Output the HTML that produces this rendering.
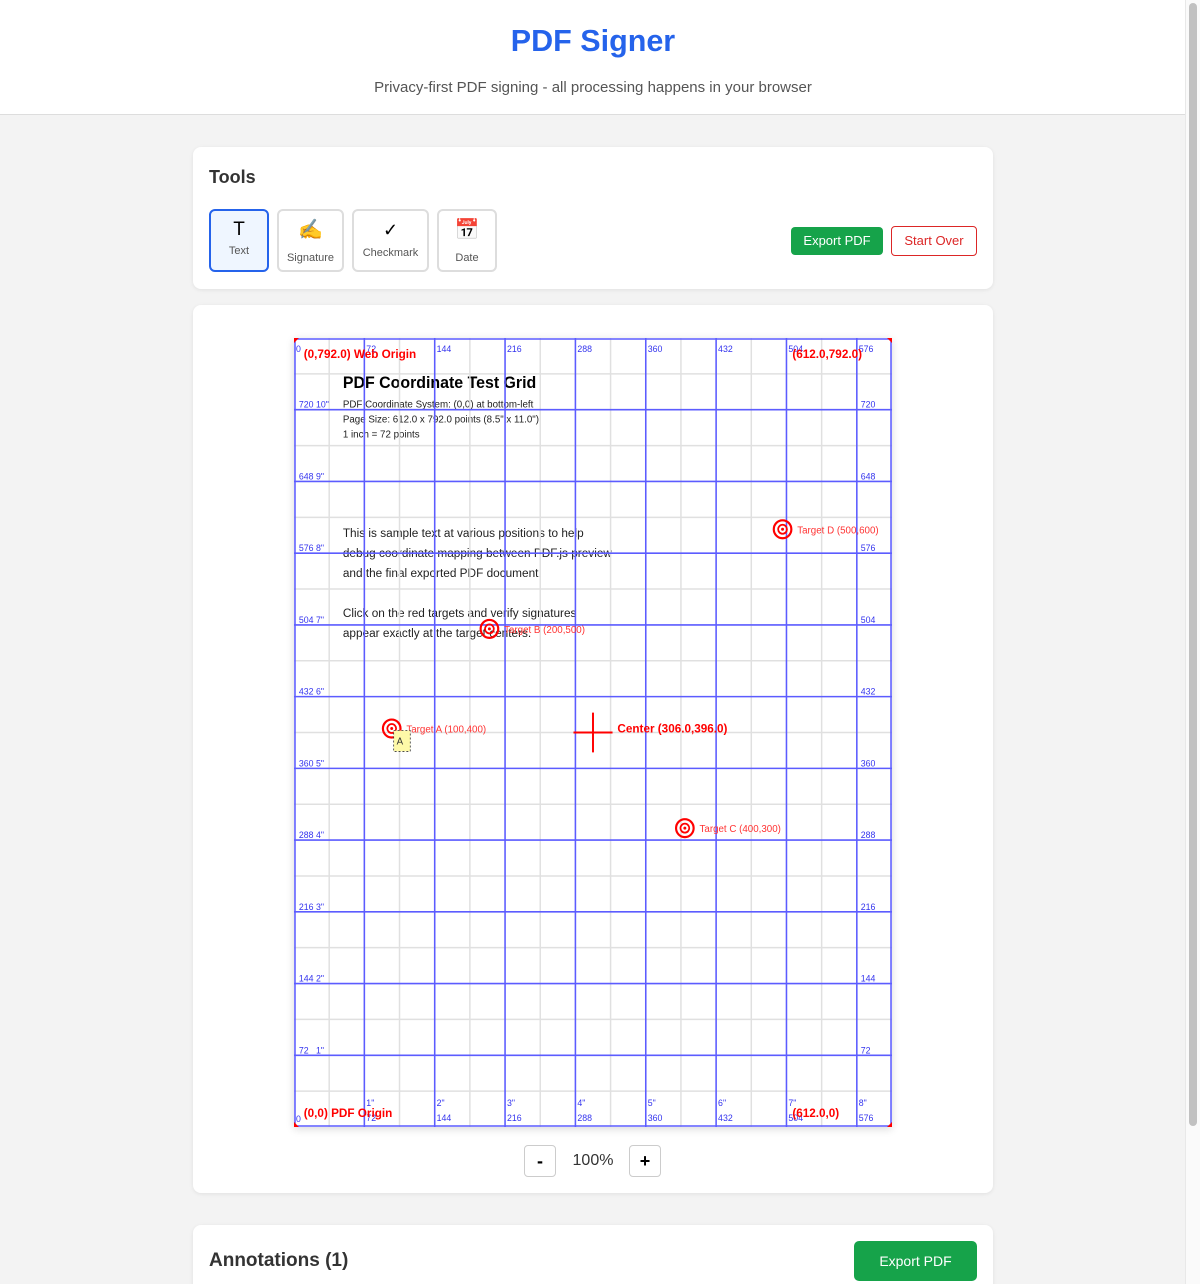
<!DOCTYPE html>
<html><head><meta charset="utf-8"><style>
*{box-sizing:border-box;margin:0;padding:0}
html,body{width:1200px;height:1284px;overflow:hidden}
body{background:#f3f3f3;font-family:"Liberation Sans",sans-serif;color:#333;position:relative}
.hdr{position:absolute;left:0;top:0;width:1186px;height:115px;background:#fff;border-bottom:1px solid #ddd;text-align:center}
.hdr h1{position:absolute;left:0;right:0;top:24px;font-size:30.5px;color:#2563eb;font-weight:bold}
.hdr p{position:absolute;left:0;right:0;top:79px;font-size:15px;color:#555}
.card{position:absolute;left:193px;width:800px;background:#fff;border-radius:8px;box-shadow:0 1px 4px rgba(0,0,0,.08)}
.tool{position:absolute;top:62px;height:63px;border:2px solid #ddd;border-radius:6px;background:#fff;text-align:center;font-size:11px;color:#555}
.tool .i{display:block;font-size:20px;margin-top:6px;height:26px;line-height:26px;color:#000}
.btn{position:absolute;font-size:13px;border-radius:4px;text-align:center}
.sb{position:absolute;left:1185px;top:0;width:15px;height:1284px;background:#fafafa;border-left:1px solid #e8e8e8}
.sb div{position:absolute;left:3px;top:3px;width:8px;height:1123px;background:#c1c1c1;border-radius:4px}
.zb{position:absolute;top:840px;width:32px;height:32px;border:1px solid #ccc;border-radius:4px;text-align:center;line-height:30px;font-size:18px;color:#000;font-weight:bold}
</style></head><body>
<div class="hdr"><h1>PDF Signer</h1><p>Privacy-first PDF signing - all processing happens in your browser</p></div>

<div class="card" style="top:147px;height:142px">
<div style="position:absolute;left:16px;top:20px;font-size:18px;font-weight:bold;color:#333">Tools</div>
<div class="tool" style="left:16px;width:60px;border-color:#2563eb;background:#eff6ff"><span class="i" style="font-size:19px">T</span><span style="position:relative;top:2px">Text</span></div>
<div class="tool" style="left:84px;width:67px"><span class="i">✍️</span><span style="position:relative;top:9px">Signature</span></div>
<div class="tool" style="left:159px;width:77px"><span class="i" style="font-size:18px">✓</span><span style="position:relative;top:4px">Checkmark</span></div>
<div class="tool" style="left:244px;width:60px"><span class="i">📅</span><span style="position:relative;top:9px">Date</span></div>
<div class="btn" style="left:598px;top:80px;width:92px;height:28px;line-height:28px;background:#16a34a;color:#fff">Export PDF</div>
<div class="btn" style="left:698px;top:79px;width:86px;height:30px;line-height:28px;border:1px solid #dc2626;color:#dc2626">Start Over</div>
</div>

<div class="card" style="top:305px;height:888px">
<svg style="position:absolute;left:101px;top:33px;box-shadow:0 2px 8px rgba(0,0,0,.15)" width="598" height="789" viewBox="0 0 612 792" preserveAspectRatio="none" font-family="Liberation Sans, sans-serif">
<rect width="612" height="792" fill="#fff"/>
<g fill="#222">
<text x="50" y="50" font-size="16.3" font-weight="bold" fill="#000">PDF Coordinate Test Grid</text>
<text x="50" y="70" font-size="10">PDF Coordinate System: (0,0) at bottom-left</text>
<text x="50" y="85" font-size="10">Page Size: 612.0 x 792.0 points (8.5" x 11.0")</text>
<text x="50" y="100" font-size="10">1 inch = 72 points</text>
<text x="50" y="200" font-size="12.1">This is sample text at various positions to help</text>
<text x="50" y="220" font-size="12.1">debug coordinate mapping between PDF.js preview</text>
<text x="50" y="240" font-size="12.1">and the final exported PDF document.</text>
<text x="50" y="280" font-size="12.1">Click on the red targets and verify signatures</text>
<text x="50" y="300" font-size="12.1">appear exactly at the target centers.</text>
</g>
<g stroke="#e0e0e0" stroke-width="1.5">
<path d="M36 0V792M108 0V792M180 0V792M252 0V792M324 0V792M396 0V792M468 0V792M540 0V792M0 36H612M0 108H612M0 180H612M0 252H612M0 324H612M0 396H612M0 468H612M0 540H612M0 612H612M0 684H612M0 756H612"/>
</g>
<g stroke="#5c5cff" stroke-width="1.6">
<path d="M1 0V792M72 0V792M144 0V792M216 0V792M288 0V792M360 0V792M432 0V792M504 0V792M576 0V792M611 0V792M0 1H612M0 72H612M0 144H612M0 216H612M0 288H612M0 360H612M0 432H612M0 504H612M0 576H612M0 648H612M0 720H612M0 791H612"/>
</g>
<g fill="#3333ee" font-size="9">
<text x="2" y="14">0</text><text x="74" y="14">72</text><text x="146" y="14">144</text><text x="218" y="14">216</text><text x="290" y="14">288</text><text x="362" y="14">360</text><text x="434" y="14">432</text><text x="506" y="14">504</text><text x="578" y="14">576</text>
<text x="5" y="70">720 10"</text><text x="5" y="142">648 9"</text><text x="5" y="214">576 8"</text><text x="5" y="286">504 7"</text><text x="5" y="358">432 6"</text><text x="5" y="430">360 5"</text><text x="5" y="502">288 4"</text><text x="5" y="574">216 3"</text><text x="5" y="646">144 2"</text><text x="5" y="718">72&#160;&#160;&#160;1"</text>
<text x="580" y="70">720</text><text x="580" y="142">648</text><text x="580" y="214">576</text><text x="580" y="286">504</text><text x="580" y="358">432</text><text x="580" y="430">360</text><text x="580" y="502">288</text><text x="580" y="574">216</text><text x="580" y="646">144</text><text x="580" y="718">72</text>
<text x="74" y="771">1"</text><text x="146" y="771">2"</text><text x="218" y="771">3"</text><text x="290" y="771">4"</text><text x="362" y="771">5"</text><text x="434" y="771">6"</text><text x="506" y="771">7"</text><text x="578" y="771">8"</text>
<text x="2" y="787">0</text><text x="74" y="786">72</text><text x="146" y="786">144</text><text x="218" y="786">216</text><text x="290" y="786">288</text><text x="362" y="786">360</text><text x="434" y="786">432</text><text x="506" y="786">504</text><text x="578" y="786">576</text>
</g>
<g fill="#f00" font-weight="bold" font-size="12">
<text x="10" y="20">(0,792.0) Web Origin</text>
<text x="510" y="20">(612.0,792.0)</text>
<text x="10" y="782">(0,0) PDF Origin</text>
<text x="510" y="782">(612.0,0)</text>
<text x="331" y="396">Center (306.0,396.0)</text>
</g>
<path d="M0 0H5L0 5Z" fill="#f00"/><path d="M612 0V5L607 0Z" fill="#f00"/><path d="M0 792V787L5 792Z" fill="#f00"/><path d="M612 792H607L612 787Z" fill="#f00"/>
<path d="M286 396H326M306 376V416" stroke="#f00" stroke-width="2"/>
<g fill="none" stroke="#f00">
<circle cx="100" cy="392" r="9" stroke-width="2.2"/><circle cx="100" cy="392" r="4.5" stroke-width="1.8"/>
<circle cx="200" cy="292" r="9" stroke-width="2.2"/><circle cx="200" cy="292" r="4.5" stroke-width="1.8"/>
<circle cx="400" cy="492" r="9" stroke-width="2.2"/><circle cx="400" cy="492" r="4.5" stroke-width="1.8"/>
<circle cx="500" cy="192" r="9" stroke-width="2.2"/><circle cx="500" cy="192" r="4.5" stroke-width="1.8"/>
</g>
<g fill="#f00"><circle cx="100" cy="392" r="1.5"/><circle cx="200" cy="292" r="1.5"/><circle cx="400" cy="492" r="1.5"/><circle cx="500" cy="192" r="1.5"/></g>
<g fill="#f33" font-size="10">
<text x="115" y="396">Target A (100,400)</text>
<text x="215" y="296">Target B (200,500)</text>
<text x="415" y="496">Target C (400,300)</text>
<text x="515" y="196">Target D (500,600)</text>
</g>
<rect x="102" y="394" width="17" height="21" fill="#fef9a8" stroke="#333" stroke-width="0.8" stroke-dasharray="2 2"/>
<text x="105" y="408" font-size="10" fill="#333">A</text>
</svg>
<div class="zb" style="left:331px">-</div>
<div style="position:absolute;left:370px;top:847px;width:60px;text-align:center;font-size:16px;color:#333">100%</div>
<div class="zb" style="left:436px">+</div>
</div>

<div class="card" style="top:1225px;height:80px">
<div style="position:absolute;left:16px;top:25px;font-size:19px;font-weight:bold;color:#333">Annotations (1)</div>
<div class="btn" style="left:661px;top:16px;width:123px;height:40px;line-height:40px;background:#16a34a;color:#fff;font-size:14px;border-radius:5px">Export PDF</div>
</div>
<div class="sb"><div></div></div>
</body></html>
